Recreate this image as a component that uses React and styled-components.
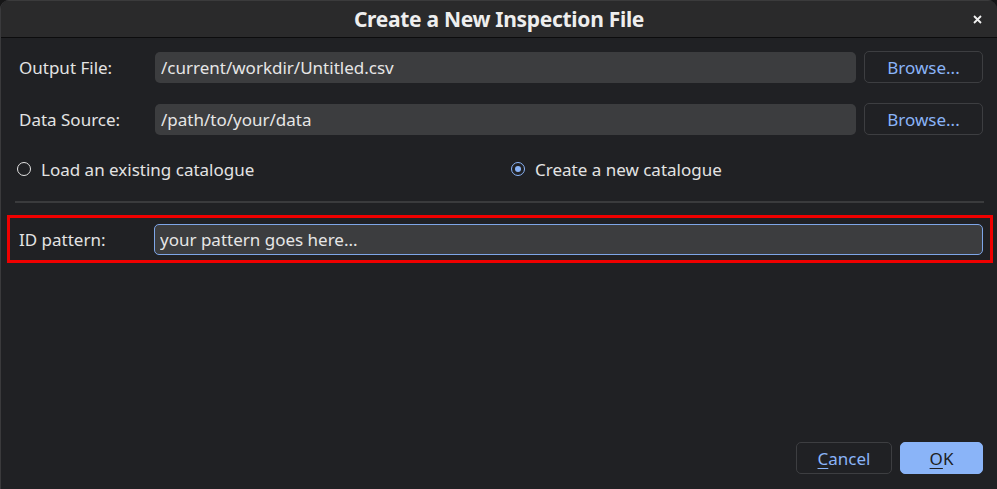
import React from 'react';
import styled, { createGlobalStyle } from 'styled-components';

const GlobalStyle = createGlobalStyle`
  html, body {
    margin: 0;
    padding: 0;
    background: #161617;
  }
  body {
    font-family: "Noto Sans", "DejaVu Sans", sans-serif;
    color: #e3e3e3;
  }
`;

const Window = styled.div`
  width: 997px;
  height: 489px;
  display: flex;
  flex-direction: column;
  box-sizing: border-box;
  background: #202124;
  border-left: 1px solid #3a3a3c;
  border-radius: 9px 9px 0 0;
  overflow: hidden;
`;

const TitleBar = styled.div`
  height: 38px;
  flex-shrink: 0;
  display: flex;
  align-items: center;
  justify-content: center;
  position: relative;
  background: #2a2a2b;
  border-top: 1px solid #3b3b3c;
  border-bottom: 1px solid #0c0c0d;
  box-sizing: border-box;
`;

const Title = styled.h1`
  margin: 0;
  font-size: 21px;
  font-weight: 700;
  color: #eeeeee;
  letter-spacing: -0.3px;
`;

const CloseButton = styled.button`
  position: absolute;
  right: 12px;
  top: 10px;
  width: 16px;
  height: 16px;
  padding: 0;
  border: 0;
  background: transparent;
  display: flex;
  align-items: center;
  justify-content: center;
`;

const Body = styled.div`
  flex: 1;
  display: flex;
  flex-direction: column;
  padding: 13px 14px 0 14px;
`;

const FormRow = styled.div`
  display: grid;
  grid-template-columns: ${p => p.$labelWidth || 132}px 1fr ${p => (p.$noButton ? '' : 'auto')};
  align-items: center;
  column-gap: 8px;
  margin-bottom: ${p => p.$gap || 0}px;
`;

const Label = styled.label`
  padding-left: 4px;
  font-size: 17px;
  white-space: nowrap;
`;

const Field = styled.input`
  height: 31px;
  box-sizing: border-box;
  width: 100%;
  border-radius: 5px;
  border: 1px solid ${p => (p.$focused ? '#7ea6e8' : 'transparent')};
  background: #3c3d3f;
  color: #e6e6e6;
  font-family: inherit;
  font-size: 17px;
  padding: 0 5px;
  outline: none;
`;

const Button = styled.button`
  height: 32px;
  box-sizing: border-box;
  border-radius: 5px;
  font-family: inherit;
  font-size: 17px;
  padding: 0;
  width: ${p => p.$width}px;
  border: 1px solid ${p => (p.$primary ? '#8ab4f8' : '#3d3e41')};
  background: ${p => (p.$primary ? '#8ab4f8' : 'transparent')};
  color: ${p => (p.$primary ? '#1d1e21' : '#8ab4f8')};
`;

const Mnemonic = styled.span`
  text-decoration: underline;
  text-underline-offset: 3px;
`;

const RadioRow = styled.div`
  display: grid;
  grid-template-columns: 494px 1fr;
  padding-left: 2px;
  margin-top: 18px;
  height: 32px;
  align-items: center;
`;

const RadioOption = styled.label`
  display: flex;
  align-items: center;
  gap: 10px;
  font-size: 17px;
`;

const RadioDot = styled.span`
  width: 14px;
  height: 14px;
  box-sizing: border-box;
  border-radius: 50%;
  border: 1.5px solid ${p => (p.$checked ? '#8ab4f8' : '#e3e3e3')};
  display: flex;
  align-items: center;
  justify-content: center;
  &::after {
    content: '';
    width: 6px;
    height: 6px;
    border-radius: 50%;
    background: ${p => (p.$checked ? '#8ab4f8' : 'transparent')};
  }
`;

const Separator = styled.hr`
  margin: 16px 0 0 0;
  width: 969px;
  border: 0;
  height: 2px;
  background: #3a3b3d;
`;

const Highlight = styled.div`
  margin: 12px -10px 0 -8px;
  border: 3px solid #f00000;
  padding: 6px 7px 5px 5px;
`;

const Footer = styled.div`
  margin-top: auto;
  display: flex;
  justify-content: flex-end;
  gap: 8px;
  padding: 0 14px 15px 0;
`;

function App() {
  return (
    <>
      <GlobalStyle />
      <Window>
        <TitleBar>
          <Title>Create a New Inspection File</Title>
          <CloseButton aria-label="Close">
            <svg width="9" height="9" viewBox="0 0 9 9">
              <path d="M1 1 L8 8 M8 1 L1 8" stroke="#f2f2f2" strokeWidth="1.8" />
            </svg>
          </CloseButton>
        </TitleBar>

        <Body>
          <FormRow $gap={20}>
            <Label>Output File:</Label>
            <Field defaultValue="/current/workdir/Untitled.csv" />
            <Button $width={119}>Browse...</Button>
          </FormRow>
          <FormRow>
            <Label>Data Source:</Label>
            <Field defaultValue="/path/to/your/data" />
            <Button $width={119}>Browse...</Button>
          </FormRow>

          <RadioRow>
            <RadioOption>
              <RadioDot />
              Load an existing catalogue
            </RadioOption>
            <RadioOption>
              <RadioDot $checked />
              Create a new catalogue
            </RadioOption>
          </RadioRow>

          <Separator />

          <Highlight>
            <FormRow $labelWidth={131} $noButton>
              <Label>ID pattern:</Label>
              <Field $focused defaultValue="your pattern goes here..." />
            </FormRow>
          </Highlight>
        </Body>

        <Footer>
          <Button $width={96}>
            <Mnemonic>C</Mnemonic>ancel
          </Button>
          <Button $width={83} $primary>
            <Mnemonic>O</Mnemonic>K
          </Button>
        </Footer>
      </Window>
    </>
  );
}

export default App;
